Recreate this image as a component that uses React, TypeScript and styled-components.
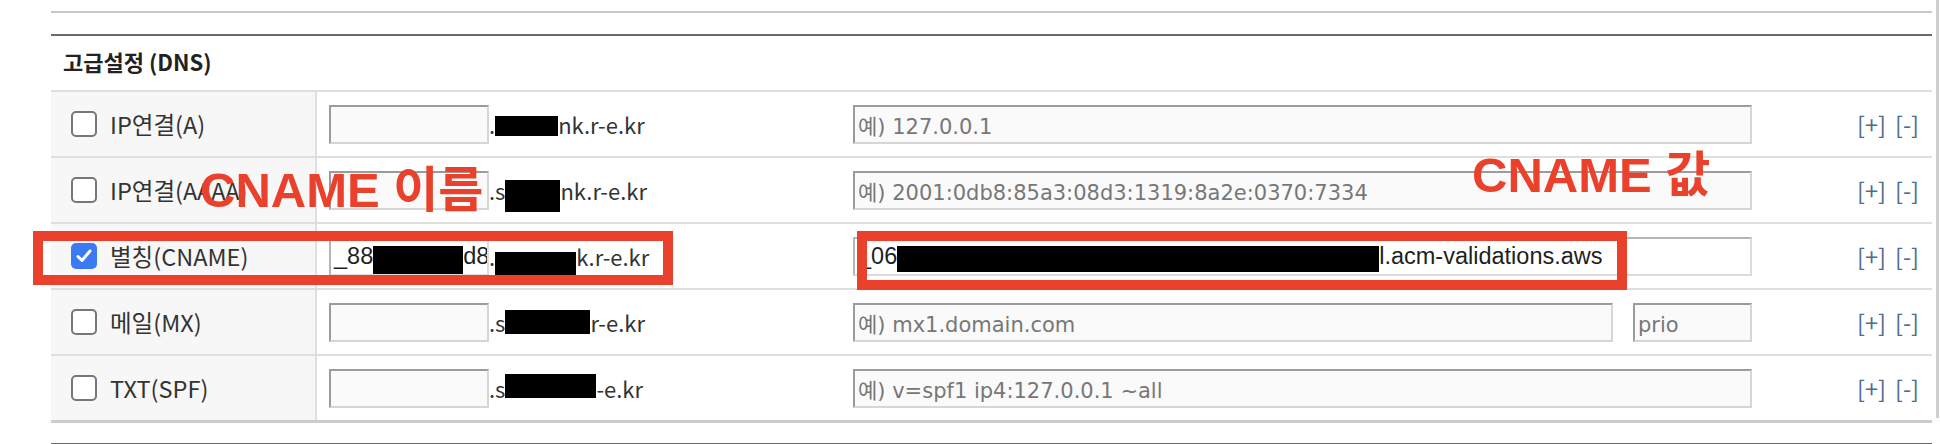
import styled, { createGlobalStyle } from "styled-components";

const GlobalStyle = createGlobalStyle`
  html, body { margin: 0; padding: 0; background: #fff; }
  body { font-family: "Noto Sans CJK KR", "Noto Sans", sans-serif; }
`;

const Page = styled.div`
  position: relative;
  display: flex;
  width: 1940px;
  height: 444px;
  overflow: hidden;
`;

const Main = styled.div`
  width: 1932px;
  padding: 11px 0 0 51px;
  box-sizing: border-box;
`;

const ScrollEdge = styled.div`
  width: 3px;
  height: 418px;
  margin-left: 4px;
  background: #cfcfcf;
`;

const PrevSection = styled.div`
  height: 21px;
  border-top: 2px solid #c9c9c9;
`;

const Section = styled.section`
  border-top: 2px solid #6a6a6a;
`;

const NextSection = styled.div`
  margin-top: 20px;
  border-top: 2px solid #6a6a6a;
`;

const Heading = styled.h3`
  margin: 0;
  height: 54px;
  display: flex;
  align-items: center;
  padding: 0 0 4px 12px;
  box-sizing: border-box;
  font-size: 22px;
  font-weight: 700;
  color: #222;
`;

const Table = styled.div`
  border-bottom: 3px solid #cccccc;
`;

const Row = styled.div`
  display: grid;
  grid-template-columns: 266px 536px 899px 1fr;
  height: 66px;
  border-top: 2px solid #dfdfdf;
  box-sizing: border-box;
`;

const LabelCell = styled.label`
  display: flex;
  align-items: center;
  gap: 13px;
  padding-left: 20px;
  background: #f7f7f7;
  border-right: 2px solid #dfdfdf;
  font-size: 23.5px;
  color: #333;
`;

const CheckBox = styled.span<{ $checked?: boolean }>`
  display: flex;
  align-items: center;
  justify-content: center;
  width: 26px;
  height: 26px;
  box-sizing: border-box;
  border-radius: 5px;
  border: ${(p) => (p.$checked ? "none" : "2px solid #777")};
  background: ${(p) => (p.$checked ? "#3a7bf5" : "#fff")};
`;

const NameCell = styled.div`
  display: flex;
  align-items: center;
  padding-left: 12px;
`;

const ValueCell = styled.div`
  display: flex;
  align-items: center;
  gap: 20px;
`;

const ActionCell = styled.div`
  display: flex;
  align-items: center;
  justify-content: flex-end;
  gap: 9px;
  padding-right: 13px;
`;

const ActionLink = styled.a`
  font-size: 23.5px;
  color: #4f6d8e;
  text-decoration: none;
  cursor: pointer;
`;

const fieldBox = `
  height: 39px;
  box-sizing: border-box;
  border: 2px solid;
  border-color: #9b9b9b #d6d6d6 #d6d6d6 #9b9b9b;
  margin: 0;
`;

const EmptyInput = styled.input<{ $width: number }>`
  ${fieldBox}
  width: ${(p) => p.$width}px;
  background: #fafafa;
  padding: 6px 0 0 3px;
  font-family: "DejaVu Sans", "Noto Sans CJK KR", sans-serif;
  font-size: 21px;
  color: #333;
  &::placeholder {
    color: #777;
  }
`;

const FilledField = styled.div<{ $width: number }>`
  ${fieldBox}
  width: ${(p) => p.$width}px;
  background: #fff;
  border-color: #b5b5b5 #dcdcdc #dcdcdc #b5b5b5;
  padding-left: 3px;
  display: flex;
  align-items: center;
  overflow: hidden;
  white-space: nowrap;
  font-family: "Liberation Sans", Arial, sans-serif;
  font-size: 23.5px;
  color: #1e1e1e;
`;

const Suffix = styled.span`
  display: flex;
  align-items: center;
  white-space: nowrap;
  font-size: 22px;
  color: #333;
`;

const Redact = styled.span<{ $w: number; $h: number; $dy?: number }>`
  display: inline-block;
  flex: none;
  width: ${(p) => p.$w}px;
  height: ${(p) => p.$h}px;
  background: #000;
  transform: translateY(${(p) => p.$dy ?? 0}px);
`;

const Callout = styled.div<{ $left: number; $top: number }>`
  position: absolute;
  left: ${(p) => p.$left}px;
  top: ${(p) => p.$top}px;
  font-family: "Liberation Sans", Arial, "Noto Sans CJK KR", sans-serif;
  font-weight: 700;
  font-size: 49px;
  line-height: 49px;
  color: #e9412b;
  white-space: nowrap;
`;

const Highlight = styled.div<{ $left: number; $top: number; $width: number; $height: number }>`
  position: absolute;
  left: ${(p) => p.$left}px;
  top: ${(p) => p.$top}px;
  width: ${(p) => p.$width}px;
  height: ${(p) => p.$height}px;
  box-sizing: border-box;
  border: 10px solid #e9412b;
`;

function Check({ checked }: { checked?: boolean }) {
  return (
    <CheckBox $checked={checked}>
      {checked && (
        <svg width="18" height="18" viewBox="0 0 18 18">
          <path d="M3 9.5 L7 13.5 L15 4" fill="none" stroke="#fff" strokeWidth="3" strokeLinecap="round" strokeLinejoin="round" />
        </svg>
      )}
    </CheckBox>
  );
}

function Actions() {
  return (
    <ActionCell>
      <ActionLink>[+]</ActionLink>
      <ActionLink>[-]</ActionLink>
    </ActionCell>
  );
}

export default function App() {
  return (
    <Page>
      <GlobalStyle />
      <Main>
        <PrevSection />
        <Section>
          <Heading>고급설정 (DNS)</Heading>
          <Table>
            <Row>
              <LabelCell>
                <Check />
                IP연결(A)
              </LabelCell>
              <NameCell>
                <EmptyInput $width={160} />
                <Suffix>
                  .<Redact $w={63} $h={20} $dy={2} />nk.r-e.kr
                </Suffix>
              </NameCell>
              <ValueCell>
                <EmptyInput $width={899} placeholder="예) 127.0.0.1" />
              </ValueCell>
              <Actions />
            </Row>
            <Row>
              <LabelCell>
                <Check />
                IP연결(AAAA)
              </LabelCell>
              <NameCell>
                <EmptyInput $width={160} />
                <Suffix>
                  .s<Redact $w={55} $h={32} $dy={6} />nk.r-e.kr
                </Suffix>
              </NameCell>
              <ValueCell>
                <EmptyInput $width={899} placeholder="예) 2001:0db8:85a3:08d3:1319:8a2e:0370:7334" />
              </ValueCell>
              <Actions />
            </Row>
            <Row>
              <LabelCell>
                <Check checked />
                별칭(CNAME)
              </LabelCell>
              <NameCell>
                <FilledField $width={160}>
                  _88<Redact $w={90} $h={28} $dy={4} />d8:
                </FilledField>
                <Suffix>
                  .<Redact $w={81} $h={23} $dy={7} />k.r-e.kr
                </Suffix>
              </NameCell>
              <ValueCell>
                <FilledField $width={899}>
                  _06<Redact $w={482} $h={26} $dy={3} />l.acm-validations.aws
                </FilledField>
              </ValueCell>
              <Actions />
            </Row>
            <Row>
              <LabelCell>
                <Check />
                메일(MX)
              </LabelCell>
              <NameCell>
                <EmptyInput $width={160} />
                <Suffix>
                  .s<Redact $w={85} $h={24} />r-e.kr
                </Suffix>
              </NameCell>
              <ValueCell>
                <EmptyInput $width={760} placeholder="예) mx1.domain.com" />
                <EmptyInput $width={119} placeholder="prio" />
              </ValueCell>
              <Actions />
            </Row>
            <Row>
              <LabelCell>
                <Check />
                TXT(SPF)
              </LabelCell>
              <NameCell>
                <EmptyInput $width={160} />
                <Suffix>
                  .s<Redact $w={91} $h={24} $dy={-2} />-e.kr
                </Suffix>
              </NameCell>
              <ValueCell>
                <EmptyInput $width={899} placeholder="예) v=spf1 ip4:127.0.0.1 ~all" />
              </ValueCell>
              <Actions />
            </Row>
          </Table>
        </Section>
        <NextSection />
      </Main>
      <ScrollEdge />

      <Callout $left={200} $top={166}>CNAME 이름</Callout>
      <Callout $left={1472} $top={151}>CNAME 값</Callout>
      <Highlight $left={33} $top={231} $width={640} $height={54} />
      <Highlight $left={857} $top={231} $width={770} $height={59} />
    </Page>
  );
}
